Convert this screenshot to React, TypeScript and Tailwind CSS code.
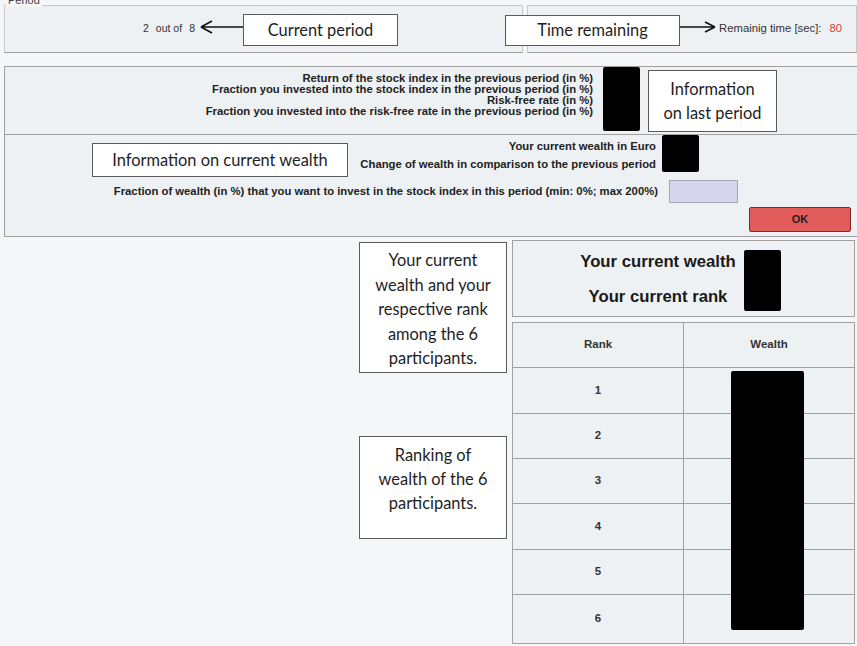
import type { ReactNode } from "react";

const rowHeights = ["h-[46px]", "h-[45px]", "h-[45px]", "h-[46px]", "h-[45px]", "h-[48px]"];

function Note({ className, children }: { className: string; children: ReactNode }) {
  return (
    <div
      className={`absolute flex flex-col items-center justify-center border border-[#5a5a5a] bg-white text-center font-['Lato',sans-serif] text-[16.4px] text-[#1e1e1e] ${className}`}
    >
      {children}
    </div>
  );
}

export default function App() {
  return (
    <div className="relative h-[646px] w-[857px] overflow-hidden bg-[#f5f6f7] font-['Liberation_Sans',Arial,sans-serif] text-[#222]">
      {/* top row */}
      <div className="flex gap-[4px] pl-[4px] pt-[5px]">
        <div className="relative h-[48px] w-[519px] border border-[#c9c9c9] border-b-[#9c9c9c] bg-[#eef1f4] pl-[138px] pt-[15px] text-[10.5px] text-[#333]">
          <span className="absolute -top-[12px] left-[1px] bg-[#f5f6f7] px-[2px] text-[11px] leading-[13px] text-[#444]">
            Period
          </span>
          <span>2</span>
          <span className="ml-[7px]">out of</span>
          <span className="ml-[7px]">8</span>
        </div>
        <div className="flex h-[48px] flex-1 items-start justify-end border border-[#c9c9c9] border-b-[#9c9c9c] bg-[#eef1f4] pr-[14px] pt-[14px] text-[11.3px] text-[#333]">
          <span>Remainig time [sec]:</span>
          <span className="ml-[8px] text-[#d23c3c]">80</span>
        </div>
      </div>

      {/* last period info */}
      <div className="ml-[4px] mt-[13px] flex h-[69px] border-y border-l border-[#a0a0a0] bg-[#eef1f4]">
        <div className="w-[588px] pt-[6px] text-right text-[11.3px] font-bold leading-[11px]">
          <div>Return of the stock index in the previous period (in %)</div>
          <div>Fraction you invested into the stock index in the previous period (in %)</div>
          <div>Risk-free rate (in %)</div>
          <div>Fraction you invested into the risk-free rate in the previous period (in %)</div>
        </div>
        <div className="ml-[10px] h-[64px] w-[37px] rounded-[2px] bg-black" />
      </div>

      {/* current wealth */}
      <div className="ml-[4px] flex h-[102px] flex-col border-b border-l border-[#a0a0a0] bg-[#eef1f4]">
        <div className="flex">
          <div className="w-[651px] pt-[2px] text-right text-[11.3px] font-bold leading-[18px]">
            <div>Your current wealth in Euro</div>
            <div>Change of wealth in comparison to the previous period</div>
          </div>
          <div className="ml-[6px] h-[37px] w-[37px] rounded-[2px] bg-black" />
        </div>
        <div className="mt-[7px] flex items-center">
          <div className="w-[653px] text-right text-[11.3px] font-bold">
            Fraction of wealth (in %) that you want to invest in the stock index in this period (min: 0%; max 200%)
          </div>
          <div className="ml-[11px] h-[23px] w-[69px] border border-[#a6a6b8] bg-[#d5d5ee]" />
        </div>
        <div className="ml-[744px] mt-[4px] flex h-[25px] w-[102px] items-center justify-center rounded-[2px] border border-[#7c2a2a] bg-[#e35c5c] text-[11px] font-bold text-[#222]">
          OK
        </div>
      </div>

      {/* ranking */}
      <div className="flex flex-col items-start pl-[512px] pt-[3px]">
        <div className="flex h-[77px] w-[343px] items-center justify-center gap-[8px] border border-[#a0a0a0] bg-[#eef1f4] pr-[6px]">
          <div className="flex flex-col items-center gap-[16px] text-[16.7px] font-bold leading-[19px] text-[#1a1a1a]">
            <div>Your current wealth</div>
            <div>Your current rank</div>
          </div>
          <div className="mt-[3px] h-[61px] w-[37px] rounded-[2px] bg-black" />
        </div>

        <div className="relative mt-[5px] w-[343px] border border-[#a0a0a0] bg-[#eef1f4] text-[11.5px] font-bold text-[#333]">
          <div className="flex h-[45px] border-b border-[#a0a0a0]">
            <div className="flex w-[171px] items-center justify-center border-r border-[#a0a0a0]">Rank</div>
            <div className="flex flex-1 items-center justify-center">Wealth</div>
          </div>
          {rowHeights.map((h, i) => (
            <div key={i} className={`flex ${h} ${i < 5 ? "border-b border-[#a0a0a0]" : ""}`}>
              <div className="flex w-[171px] items-center justify-center border-r border-[#a0a0a0]">{i + 1}</div>
              <div className="flex-1" />
            </div>
          ))}
          <div className="absolute left-[218px] top-[48px] h-[259px] w-[73px] rounded-[2px] bg-black" />
        </div>
      </div>

      {/* annotations */}
      <svg className="absolute left-[199px] top-[18px]" width="46" height="18" viewBox="0 0 46 18">
        <path d="M2 9 H45 M2 9 L13 3 M2 9 L13 15" stroke="#111" strokeWidth="1.6" fill="none" />
      </svg>
      <Note className="left-[243px] top-[14px] h-[32px] w-[155px]">Current period</Note>

      <Note className="left-[505px] top-[15px] h-[31px] w-[175px]">Time remaining</Note>
      <svg className="absolute left-[679px] top-[18px]" width="40" height="18" viewBox="0 0 40 18">
        <path d="M1 9 H36 M36 9 L26 4 M36 9 L26 14" stroke="#111" strokeWidth="1.6" fill="none" />
      </svg>

      <Note className="left-[648px] top-[70px] h-[62px] w-[129px] leading-[24px]">
        <div>Information</div>
        <div>on last period</div>
      </Note>

      <Note className="left-[92px] top-[143px] h-[34px] w-[256px]">Information on current wealth</Note>

      <Note className="left-[359px] top-[242px] h-[131px] w-[148px] pt-[4px] leading-[24.5px]">
        <div>Your current</div>
        <div>wealth and your</div>
        <div>respective rank</div>
        <div>among the 6</div>
        <div>participants.</div>
      </Note>

      <Note className="left-[359px] top-[436px] h-[103px] w-[148px] justify-start pt-[6px] leading-[24px]">
        <div>Ranking of</div>
        <div>wealth of the 6</div>
        <div>participants.</div>
      </Note>
    </div>
  );
}
